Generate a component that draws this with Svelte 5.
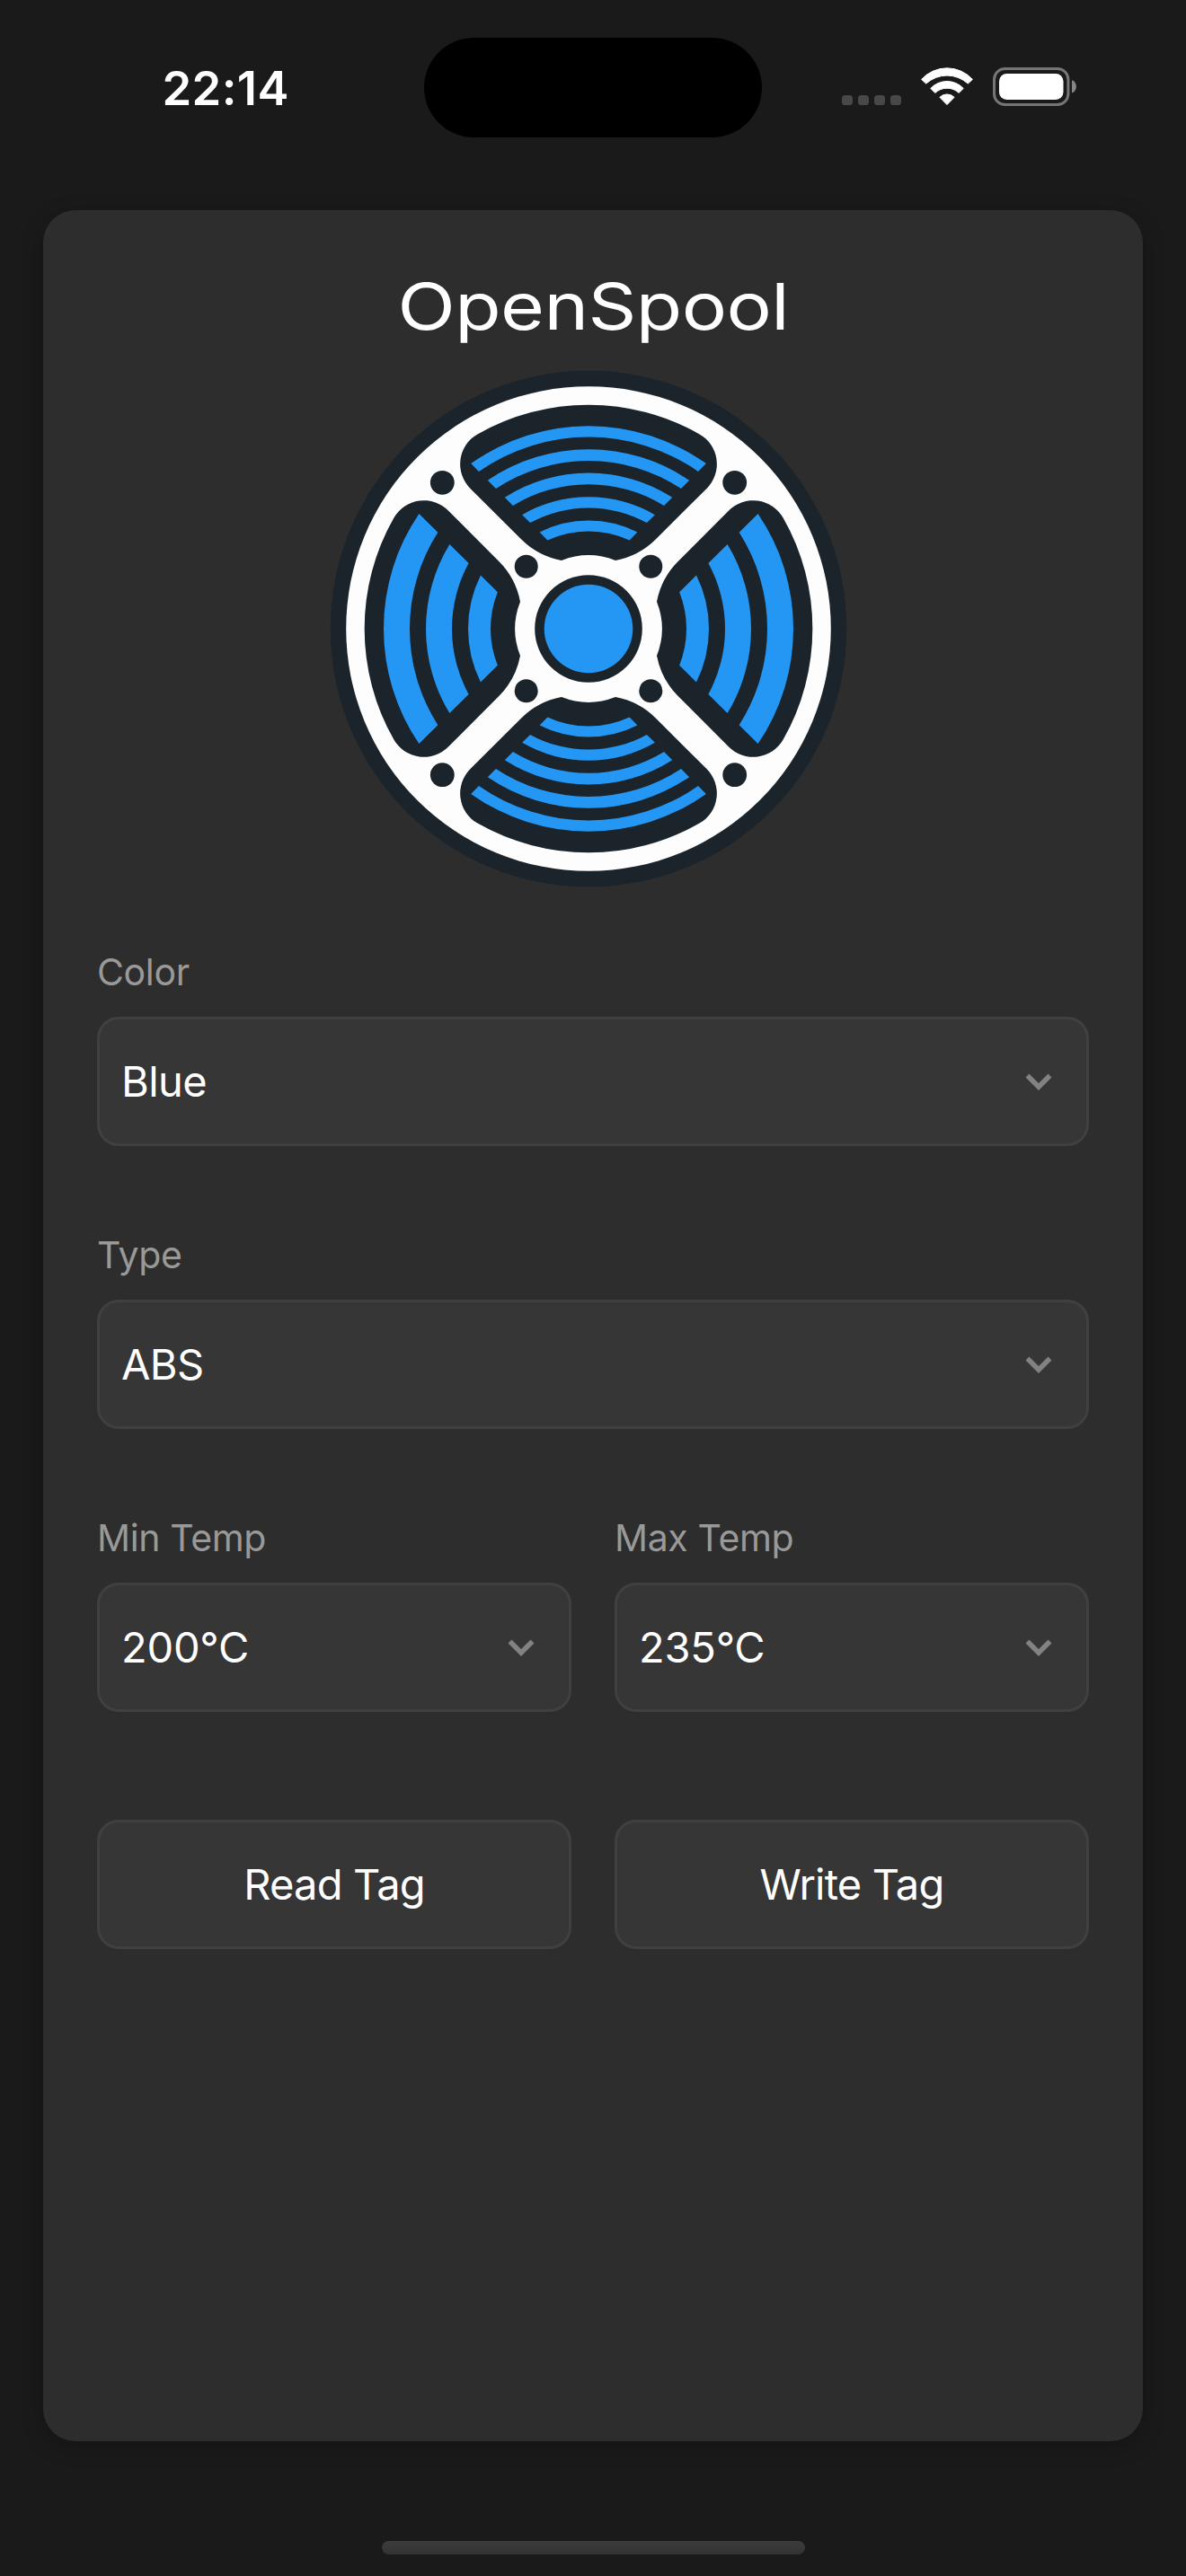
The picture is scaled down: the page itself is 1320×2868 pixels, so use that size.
<script>
  const pocket =
    'M-123.5-216.6A38.3 38.3 0 0 0-131.5-156.1L-75-99.7A86 86 0 0 0-30-76A81.7 81.7 0 0 1 30-76A86 86 0 0 0 75-99.7L131.5-156.1A38.3 38.3 0 0 0 123.5-216.6A249.4 249.4 0 0 0-123.5-216.6Z';

  // Ring slice whose ends are cut along 45° lines, `gap` away from the diagonals.
  function slice(outer, inner, gap) {
    const at = (r) => {
      const x = (-gap + Math.sqrt(2 * r * r - gap * gap)) / 2;
      return [x, -(x + gap)];
    };
    const [ox, oy] = at(outer);
    const [ix, iy] = at(inner);
    return `M${-ox} ${oy}A${outer} ${outer} 0 0 1 ${ox} ${oy}L${ix} ${iy}A${inner} ${inner} 0 0 0 ${-ix} ${iy}Z`;
  }

  const thin = [[225.7, 213.4], [199.7, 187], [173.4, 160.8], [146.8, 134.6], [120.4, 108.6]]
    .map(([o, i]) => slice(o, i, 53));
  const thick = [[228, 199], [181, 152], [134, 109]].map(([o, i]) => slice(o, i, 60.5));
  const signs = [[-1, -1], [1, -1], [-1, 1], [1, 1]];
</script>

{#snippet chevron()}
  <svg class="chevron" width="32" height="22" viewBox="0 0 32 22">
    <path d="M3.5 4.6L16 17L28.5 4.6" fill="none" stroke="#828282" stroke-width="5.6" />
  </svg>
{/snippet}

{#snippet field(label, value, tone)}
  <div class="field">
    <div class="label">{label}</div>
    <div class="box">
      <span class="value {tone}">{value}</span>
      {@render chevron()}
    </div>
  </div>
{/snippet}

<div class="screen">
  <header class="status">
    <div class="time">22:14</div>
    <div class="island"></div>
    <div class="indicators">
      <div class="dots"><i></i><i></i><i></i><i></i></div>
      <svg class="wifi" width="58" height="43" viewBox="0 0 58 43">
        <g fill="#fff" stroke="#fff" stroke-width="1" stroke-linejoin="round">
          <path d="M.6 13.4A38.4 38.4 0 0 1 57.4 13.4L52.3 18.1A34.6 34.6 0 0 0 5.7 18.1Z" />
          <path d="M10.8 23.4A25 25 0 0 1 47.2 23.4L42.2 28.4A19.4 19.4 0 0 0 15.8 28.4Z" />
          <path d="M20.9 33.3A11.4 11.4 0 0 1 37.1 33.3L29 41.6Z" />
        </g>
      </svg>
      <svg class="battery" width="94" height="43" viewBox="0 0 94 43">
        <rect x="1.5" y="1.5" width="82.4" height="40" rx="12" fill="none" stroke="#767676" stroke-width="3" />
        <rect x="7" y="7" width="71.5" height="29" rx="8.5" fill="#fff" />
        <path d="M88 14.3C91 15.4 92.9 18.2 92.9 21.4S91 27.4 88 28.5Z" fill="#868686" />
      </svg>
    </div>
  </header>

  <main class="card">
    <h1>OpenSpool</h1>
    <svg class="logo" width="576" height="576" viewBox="-288 -288 576 576">
      <circle r="287.3" fill="#1a242a" />
      <circle r="269.8" fill="#fdfdfe" />
      {#each [0, 90, 180, 270] as angle}
        <g transform="rotate({angle})">
          <path d={pocket} fill="#1a242a" />
          {#each angle % 180 ? thick : thin as d}
            <path {d} fill="#2497f5" />
          {/each}
        </g>
      {/each}
      <circle r="59.8" fill="#1a242a" />
      <circle r="49.3" fill="#2497f5" />
      {#each signs as [sx, sy]}
        <circle cx={sx * 162.7} cy={sy * 162.7} r="13.4" fill="#1a242a" />
        <circle cx={sx * 69.3} cy={sy * 69.3} r="13" fill="#1a242a" />
      {/each}
    </svg>

    <form class="form">
      {@render field('Color', 'Blue', 'snug')}
      {@render field('Type', 'ABS', 'snug')}
      <div class="pair">
        {@render field('Min Temp', '200°C', 'temp')}
        {@render field('Max Temp', '235°C', 'temp')}
      </div>
      <div class="pair actions">
        <button class="box" type="button">Read Tag</button>
        <button class="box" type="button">Write Tag</button>
      </div>
    </form>
  </main>

  <div class="home"></div>
</div>

<style>
  :global(body) { background: #1a1a1a; }
  .screen {
    width: 1320px;
    height: 2868px;
    box-sizing: border-box;
    display: flex;
    flex-direction: column;
    align-items: center;
    background: #1a1a1a;
    color: #fff;
    font-family: Inter, "Liberation Sans", sans-serif;
  }
  .status {
    width: 100%;
    height: 234px;
    box-sizing: border-box;
    padding-top: 42px;
    display: grid;
    grid-template-columns: 472px 376px 472px;
    align-items: start;
  }
  .time {
    padding-left: 180.5px;
    margin-top: 26px;
    font-size: 52.5px;
    font-weight: 600;
    line-height: 60px;
    letter-spacing: 0.4px;
  }
  .island { height: 110.5px; border-radius: 56px; background: #000; }
  .indicators { display: flex; align-items: flex-end; padding-left: 89px; margin-top: 33px; }
  .dots { display: flex; gap: 6.4px; margin-bottom: 1px; }
  .dots i { width: 11.6px; height: 11.3px; border-radius: 3.6px; background: #484848; }
  .wifi { margin-left: 22px; }
  .battery { margin-left: 22.3px; }
  svg { display: block; flex: none; }
  .card {
    width: 1224px;
    height: 2484px;
    box-sizing: border-box;
    padding: 65px 60px 0;
    border-radius: 36px;
    background: #2d2d2d;
    box-shadow: 0 6px 23px rgba(0, 0, 0, 0.25);
    display: flex;
    flex-direction: column;
    align-items: center;
  }
  h1 {
    margin: 0;
    font: 400 71.5px/84px Inter, "Liberation Sans", sans-serif;
    letter-spacing: -0.5px;
    transform: scaleX(1.175);
  }
  .logo { margin: 29px 10px 70px 0; }
  .form { width: 100%; display: flex; flex-direction: column; gap: 97px; }
  .pair { display: grid; grid-template-columns: 1fr 1fr; gap: 48px; }
  .actions { margin-top: 23px; }
  .label {
    margin-bottom: 26px;
    color: #999;
    font-size: 41px;
    line-height: 48px;
    letter-spacing: -0.35px;
  }
  .box {
    width: 100%;
    height: 144px;
    box-sizing: border-box;
    padding: 0 37px 0 24px;
    border: 3px solid #404040;
    border-radius: 24px;
    background: #363636;
    color: #fff;
    display: flex;
    align-items: center;
    justify-content: space-between;
    font: 400 47px/56px Inter, "Liberation Sans", sans-serif;
  }
  .value.snug { letter-spacing: -0.6px; }
  .value.temp { letter-spacing: -0.2px; }
  button.box { padding: 0; justify-content: center; letter-spacing: -0.8px; }
  .home {
    width: 471px;
    height: 15px;
    margin-top: 111px;
    border-radius: 8px;
    background: linear-gradient(#3c3c3c, #333);
  }
</style>
